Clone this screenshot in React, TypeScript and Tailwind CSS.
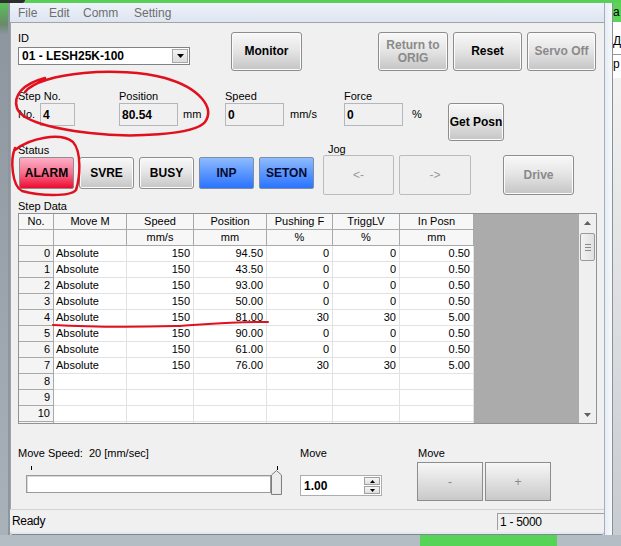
import React from 'react'

const rows: string[][] = [
  ['0', 'Absolute', '150', '94.50', '0', '0', '0.50'],
  ['1', 'Absolute', '150', '43.50', '0', '0', '0.50'],
  ['2', 'Absolute', '150', '93.00', '0', '0', '0.50'],
  ['3', 'Absolute', '150', '50.00', '0', '0', '0.50'],
  ['4', 'Absolute', '150', '81.00', '30', '30', '5.00'],
  ['5', 'Absolute', '150', '90.00', '0', '0', '0.50'],
  ['6', 'Absolute', '150', '61.00', '0', '0', '0.50'],
  ['7', 'Absolute', '150', '76.00', '30', '30', '5.00'],
  ['8', '', '', '', '', '', ''],
  ['9', '', '', '', '', '', ''],
  ['10', '', '', '', '', '', ''],
  ['', '', '', '', '', '', ''],
]

const head1 = ['No.', 'Move M', 'Speed', 'Position', 'Pushing F', 'TriggLV', 'In Posn']
const head2 = ['', '', 'mm/s', 'mm', '%', '%', 'mm']

const cols = 'grid grid-cols-[35px_73px_67px_73px_66px_67px_74px]'

function Btn({ className = '', dim, children }: { className?: string; dim?: boolean; children: React.ReactNode }) {
  return (
    <div
      className={`flex items-center justify-center rounded-[3px] border border-[#8d8d8d] bg-[linear-gradient(#f8f8f8,#e6e6e6_45%,#c5c5c5)] text-center text-[12px] font-bold leading-[13px] shadow-[inset_0_0_0_1px_#fbfbfb] ${dim ? 'text-[#8a8a8a]' : 'text-black'} ${className}`}
    >
      {children}
    </div>
  )
}

function Field({ w, value }: { w: string; value: string }) {
  return (
    <div className={`flex h-[23px] ${w} items-center border border-[#b4b6bc] bg-[#f0f0f0] pl-[2px] text-[12px] font-bold`}>
      {value}
    </div>
  )
}

function Arrow({ down }: { down?: boolean }) {
  return (
    <svg width="7" height="4" viewBox="0 0 7 4">
      <polygon points={down ? '0,0 7,0 3.5,4' : '0,4 7,4 3.5,0'} fill="#606060" />
    </svg>
  )
}

export default function App() {
  return (
    <div className="relative flex h-[546px] w-[621px] flex-col overflow-hidden bg-[#aab2ba] font-['Liberation_Sans',Arial,sans-serif] text-[11px] text-black">
      {/* top edge of the desktop behind */}
      <div className="flex h-[3px]">
        <div className="w-[25px] rounded-br-[3px] bg-[#2e2e2e]" />
        <div className="flex-1 bg-[#58d058]" />
      </div>

      <div className="flex h-[532px]">
        <div className="w-[8px] bg-[linear-gradient(#58c058,#6a8a6a_4%,#8d969e_6%,#a9b1b9)]" />

        {/* window */}
        <div className="flex w-[604px] border-l-2 border-[#8c96a0]">
          <div className="flex w-[594px] flex-col bg-[#f0f0f0]">
            {/* menu */}
            <div className="flex h-[19px] items-center bg-[linear-gradient(#eef2f9,#dde5f1)] pl-[8px] text-[12px] text-[#6e6e6e]">
              <span className="w-[31px]">File</span>
              <span className="w-[34px]">Edit</span>
              <span className="w-[51px]">Comm</span>
              <span>Setting</span>
            </div>

            {/* body */}
            <div className="flex h-[487px] flex-col border-t border-l border-[#a3a3a3] pt-[9px] pl-[7px]">
              {/* row 1 */}
              <div className="flex h-[39px] items-start">
                <div className="w-[172px]">
                  <div className="h-[13px] leading-[13px]">ID</div>
                  <div className="mt-[2px] flex h-[18px] items-center border border-[#7f8388] bg-white">
                    <span className="flex-1 pl-[3px] text-[12px] font-bold">01 - LESH25K-100</span>
                    <div className="mr-px flex h-[14px] w-[16px] items-center justify-center border border-[#a7a7a7] bg-[linear-gradient(#f4f4f4,#dcdcdc)]">
                      <svg width="7" height="4" viewBox="0 0 7 4">
                        <polygon points="0,0 7,0 3.5,4" fill="#000" />
                      </svg>
                    </div>
                  </div>
                </div>
                <Btn className="ml-[41px] h-[39px] w-[71px]">Monitor</Btn>
                <Btn dim className="ml-[76px] h-[39px] w-[70px]">
                  Return to
                  <br />
                  ORIG
                </Btn>
                <Btn className="ml-[5px] h-[39px] w-[69px]">Reset</Btn>
                <Btn dim className="ml-[5px] h-[39px] w-[69px]">Servo Off</Btn>
              </div>

              {/* row 2 */}
              <div className="mt-[18px] flex items-start">
                <div className="w-[101px]">
                  <div className="h-[14px] leading-[14px]">Step No.</div>
                  <div className="flex items-center">
                    <span className="w-[22px]">No.</span>
                    <Field w="w-[35px]" value="4" />
                  </div>
                </div>
                <div className="w-[106px]">
                  <div className="h-[14px] leading-[14px]">Position</div>
                  <div className="flex items-center">
                    <Field w="w-[59px]" value="80.54" />
                    <span className="ml-[5px]">mm</span>
                  </div>
                </div>
                <div className="w-[119px]">
                  <div className="h-[14px] leading-[14px]">Speed</div>
                  <div className="flex items-center">
                    <Field w="w-[59px]" value="0" />
                    <span className="ml-[6px]">mm/s</span>
                  </div>
                </div>
                <div className="w-[104px]">
                  <div className="h-[14px] leading-[14px]">Force</div>
                  <div className="flex items-center">
                    <Field w="w-[59px]" value="0" />
                    <span className="ml-[9px]">%</span>
                  </div>
                </div>
                <Btn className="mt-[14px] h-[38px] w-[56px]">Get Posn</Btn>
              </div>

              {/* row 3 */}
              <div className="mt-[2px] flex items-start">
                <div>
                  <div className="h-[14px] leading-[14px]">Status</div>
                  <div className="ml-px flex h-[32px] gap-[5px]">
                    <div className="flex w-[55px] items-center justify-center rounded-[2px] border border-[#8d8d8d] bg-[linear-gradient(#fbb0c6,#f76f90_50%,#ee0a2e)] text-[12px] font-bold">ALARM</div>
                    <Btn className="w-[55px] rounded-[2px]">SVRE</Btn>
                    <Btn className="w-[55px] rounded-[2px]">BUSY</Btn>
                    <div className="flex w-[55px] items-center justify-center rounded-[2px] border border-[#7d8da8] bg-[linear-gradient(#8fbcff,#5b96ff_50%,#2a74ff)] text-[12px] font-bold text-[#050a30]">INP</div>
                    <div className="flex w-[55px] items-center justify-center rounded-[2px] border border-[#7d8da8] bg-[linear-gradient(#8fbcff,#5b96ff_50%,#2a74ff)] text-[12px] font-bold text-[#050a30]">SETON</div>
                  </div>
                </div>
                <div className="ml-[9px]">
                  <div className="h-[12px] pl-[5px] leading-[12px]">Jog</div>
                  <div className="flex h-[40px]">
                    <div className="flex w-[71px] items-center justify-center rounded-[2px] border border-[#bcbcbc] bg-[#efefef] text-[12px] text-[#9a9a9a]">&lt;-</div>
                    <div className="ml-[5px] flex w-[72px] items-center justify-center rounded-[2px] border border-[#bcbcbc] bg-[#efefef] text-[12px] text-[#9a9a9a]">-&gt;</div>
                  </div>
                </div>
                <Btn dim className="mt-[12px] ml-[32px] h-[40px] w-[71px]">Drive</Btn>
              </div>

              {/* step data */}
              <div className="mt-[4px] h-[14px] leading-[14px]">Step Data</div>
              <div className="flex h-[211px] w-[579px] overflow-hidden border border-[#8f9297] bg-[#ababab]">
                <div className="w-[455px] bg-white">
                  {[head1, head2].map((h, i) => (
                    <div key={i} className={`${cols} h-[16px] bg-[#f7f7f7]`}>
                      {h.map((t, j) => (
                        <div key={j} className="border-r border-b border-[#a9a9a9] text-center leading-[15px]">
                          {t}
                        </div>
                      ))}
                    </div>
                  ))}
                  {rows.map((r, i) => (
                    <div key={i} className={`${cols} h-[16px]`}>
                      {r.map((t, j) => (
                        <div
                          key={j}
                          className={
                            j === 0
                              ? 'border-r border-b border-[#a9a9a9] bg-[#f4f4f4] pr-[3px] text-right leading-[15px]'
                              : j === 1
                                ? 'border-r border-b border-[#e2e2e2] pl-[2px] leading-[15px]'
                                : 'border-r border-b border-[#e2e2e2] pr-[3px] text-right leading-[15px]'
                          }
                        >
                          {t}
                        </div>
                      ))}
                    </div>
                  ))}
                </div>
                <div className="flex-1" />
                <div className="flex w-[17px] flex-col bg-[#efefef]">
                  <div className="flex h-[17px] items-center justify-center">
                    <Arrow />
                  </div>
                  <div className="mx-px mt-[2px] flex h-[28px] flex-col items-center justify-center gap-[2px] rounded-[2px] border border-[#9a9a9a] bg-[linear-gradient(90deg,#f3f3f3,#e0e0e0)]">
                    <div className="h-px w-[6px] bg-[#8a8a8a]" />
                    <div className="h-px w-[6px] bg-[#8a8a8a]" />
                    <div className="h-px w-[6px] bg-[#8a8a8a]" />
                  </div>
                  <div className="flex-1" />
                  <div className="flex h-[17px] items-center justify-center">
                    <Arrow down />
                  </div>
                </div>
              </div>

              {/* bottom controls */}
              <div className="mt-[23px] flex items-start">
                <div className="w-[264px]">
                  <div className="h-[13px] leading-[13px] whitespace-pre">Move Speed:  20 [mm/sec]</div>
                  <div className="mt-[6px] flex h-[4px]">
                    <div className="ml-[13px] w-px bg-black" />
                    <div className="ml-[245px] w-px bg-black" />
                  </div>
                  <div className="flex h-[25px]">
                    <div className="mt-[5px] ml-[8px] h-[18px] w-[246px] border border-[#9a9a9a] bg-white shadow-[inset_1px_1px_0_#d8d8d8]" />
                    <svg width="11" height="25" viewBox="0 0 11 25">
                      <path d="M0.5 24.5 V5 L5.5 0.5 L10.5 5 V24.5 Z" fill="#ececec" stroke="#7a7a7a" />
                    </svg>
                  </div>
                </div>
                <div className="ml-[18px]">
                  <div className="h-[13px] leading-[13px]">Move</div>
                  <div className="mt-[15px] flex h-[21px] w-[82px] items-center border border-[#abadb3] bg-white">
                    <span className="flex-1 pl-[3px] text-[12px] font-bold">1.00</span>
                    <div className="mr-px flex h-[17px] w-[16px] flex-col gap-px">
                      <div className="flex flex-1 items-center justify-center border border-[#a0a0a0] bg-[linear-gradient(#f6f6f6,#dedede)]">
                        <svg width="5" height="3" viewBox="0 0 5 3"><polygon points="0,3 5,3 2.5,0" fill="#000" /></svg>
                      </div>
                      <div className="flex flex-1 items-center justify-center border border-[#a0a0a0] bg-[linear-gradient(#f6f6f6,#dedede)]">
                        <svg width="5" height="3" viewBox="0 0 5 3"><polygon points="0,0 5,0 2.5,3" fill="#000" /></svg>
                      </div>
                    </div>
                  </div>
                </div>
                <div className="ml-[35px]">
                  <div className="h-[13px] pl-px leading-[12px]">Move</div>
                  <div className="mt-[2px] flex h-[39px]">
                    <div className="flex w-[66px] items-center justify-center border border-[#8d8d8d] bg-[linear-gradient(#f7f7f7,#c9c9c9)] text-[12px] text-[#8a8a8a]">-</div>
                    <div className="ml-[2px] flex w-[66px] items-center justify-center border border-[#8d8d8d] bg-[linear-gradient(#f7f7f7,#c9c9c9)] text-[12px] text-[#8a8a8a]">+</div>
                  </div>
                </div>
              </div>
            </div>

            {/* status bar */}
            <div className="flex h-[23px] items-center border-t border-[#d3d3d3] pl-[2px] text-[12px] tracking-[-0.3px]">
              <span className="flex-1">Ready</span>
              <div className="flex h-[17px] w-[107px] items-center border-t border-l border-[#a0a0a0] pl-[2px]">1 - 5000</div>
            </div>
            <div className="h-[3px] rounded-b-[3px] border-b border-[#7e8893] bg-[#e3e9f0]" />
          </div>
          <div className="w-[8px] border-l border-[#a5aeb8] bg-[linear-gradient(90deg,#e6edf5,#f6f9fc)]" />
        </div>

        {/* window behind, on the right */}
        <div className="flex w-[9px] flex-col border-l border-[#8f8f8f] bg-white text-[12px] leading-[19px]">
          <div className="h-[19px] overflow-hidden bg-[#5ad55a]">a</div>
          <div className="mt-[10px] h-[22px] overflow-hidden">Д</div>
          <div className="h-[24px] overflow-hidden border-t border-[#9a9a9a]">р</div>
          <div className="flex-1 bg-[linear-gradient(#f2f2f2,#c7ccd2)]" />
        </div>
      </div>

      {/* desktop under the window */}
      <div className="flex h-[11px] bg-[#b4bcc4]">
        <div className="ml-[420px] w-[137px] bg-[#57d457]" />
      </div>

      {/* red marker annotations drawn on the screenshot */}
      <svg className="pointer-events-none absolute top-0 left-0" width="621" height="546" viewBox="0 0 621 546" fill="none" stroke="#e0101e" strokeWidth="2.5" strokeLinecap="round">
        <path d="M25 92 C40 72 120 66 165 78 C200 88 215 108 205 122 C195 135 130 138 90 133 C55 129 22 122 17 108 C13 96 22 84 45 78" />
        <path d="M15 150 C30 138 60 132 73 142 C82 152 80 178 76 190 C70 197 40 196 22 191 C12 186 10 160 15 148" />
        <path d="M53 325 C90 327 140 327 175 326 C200 325 230 321 268 322" strokeWidth="2" />
      </svg>
    </div>
  )
}
